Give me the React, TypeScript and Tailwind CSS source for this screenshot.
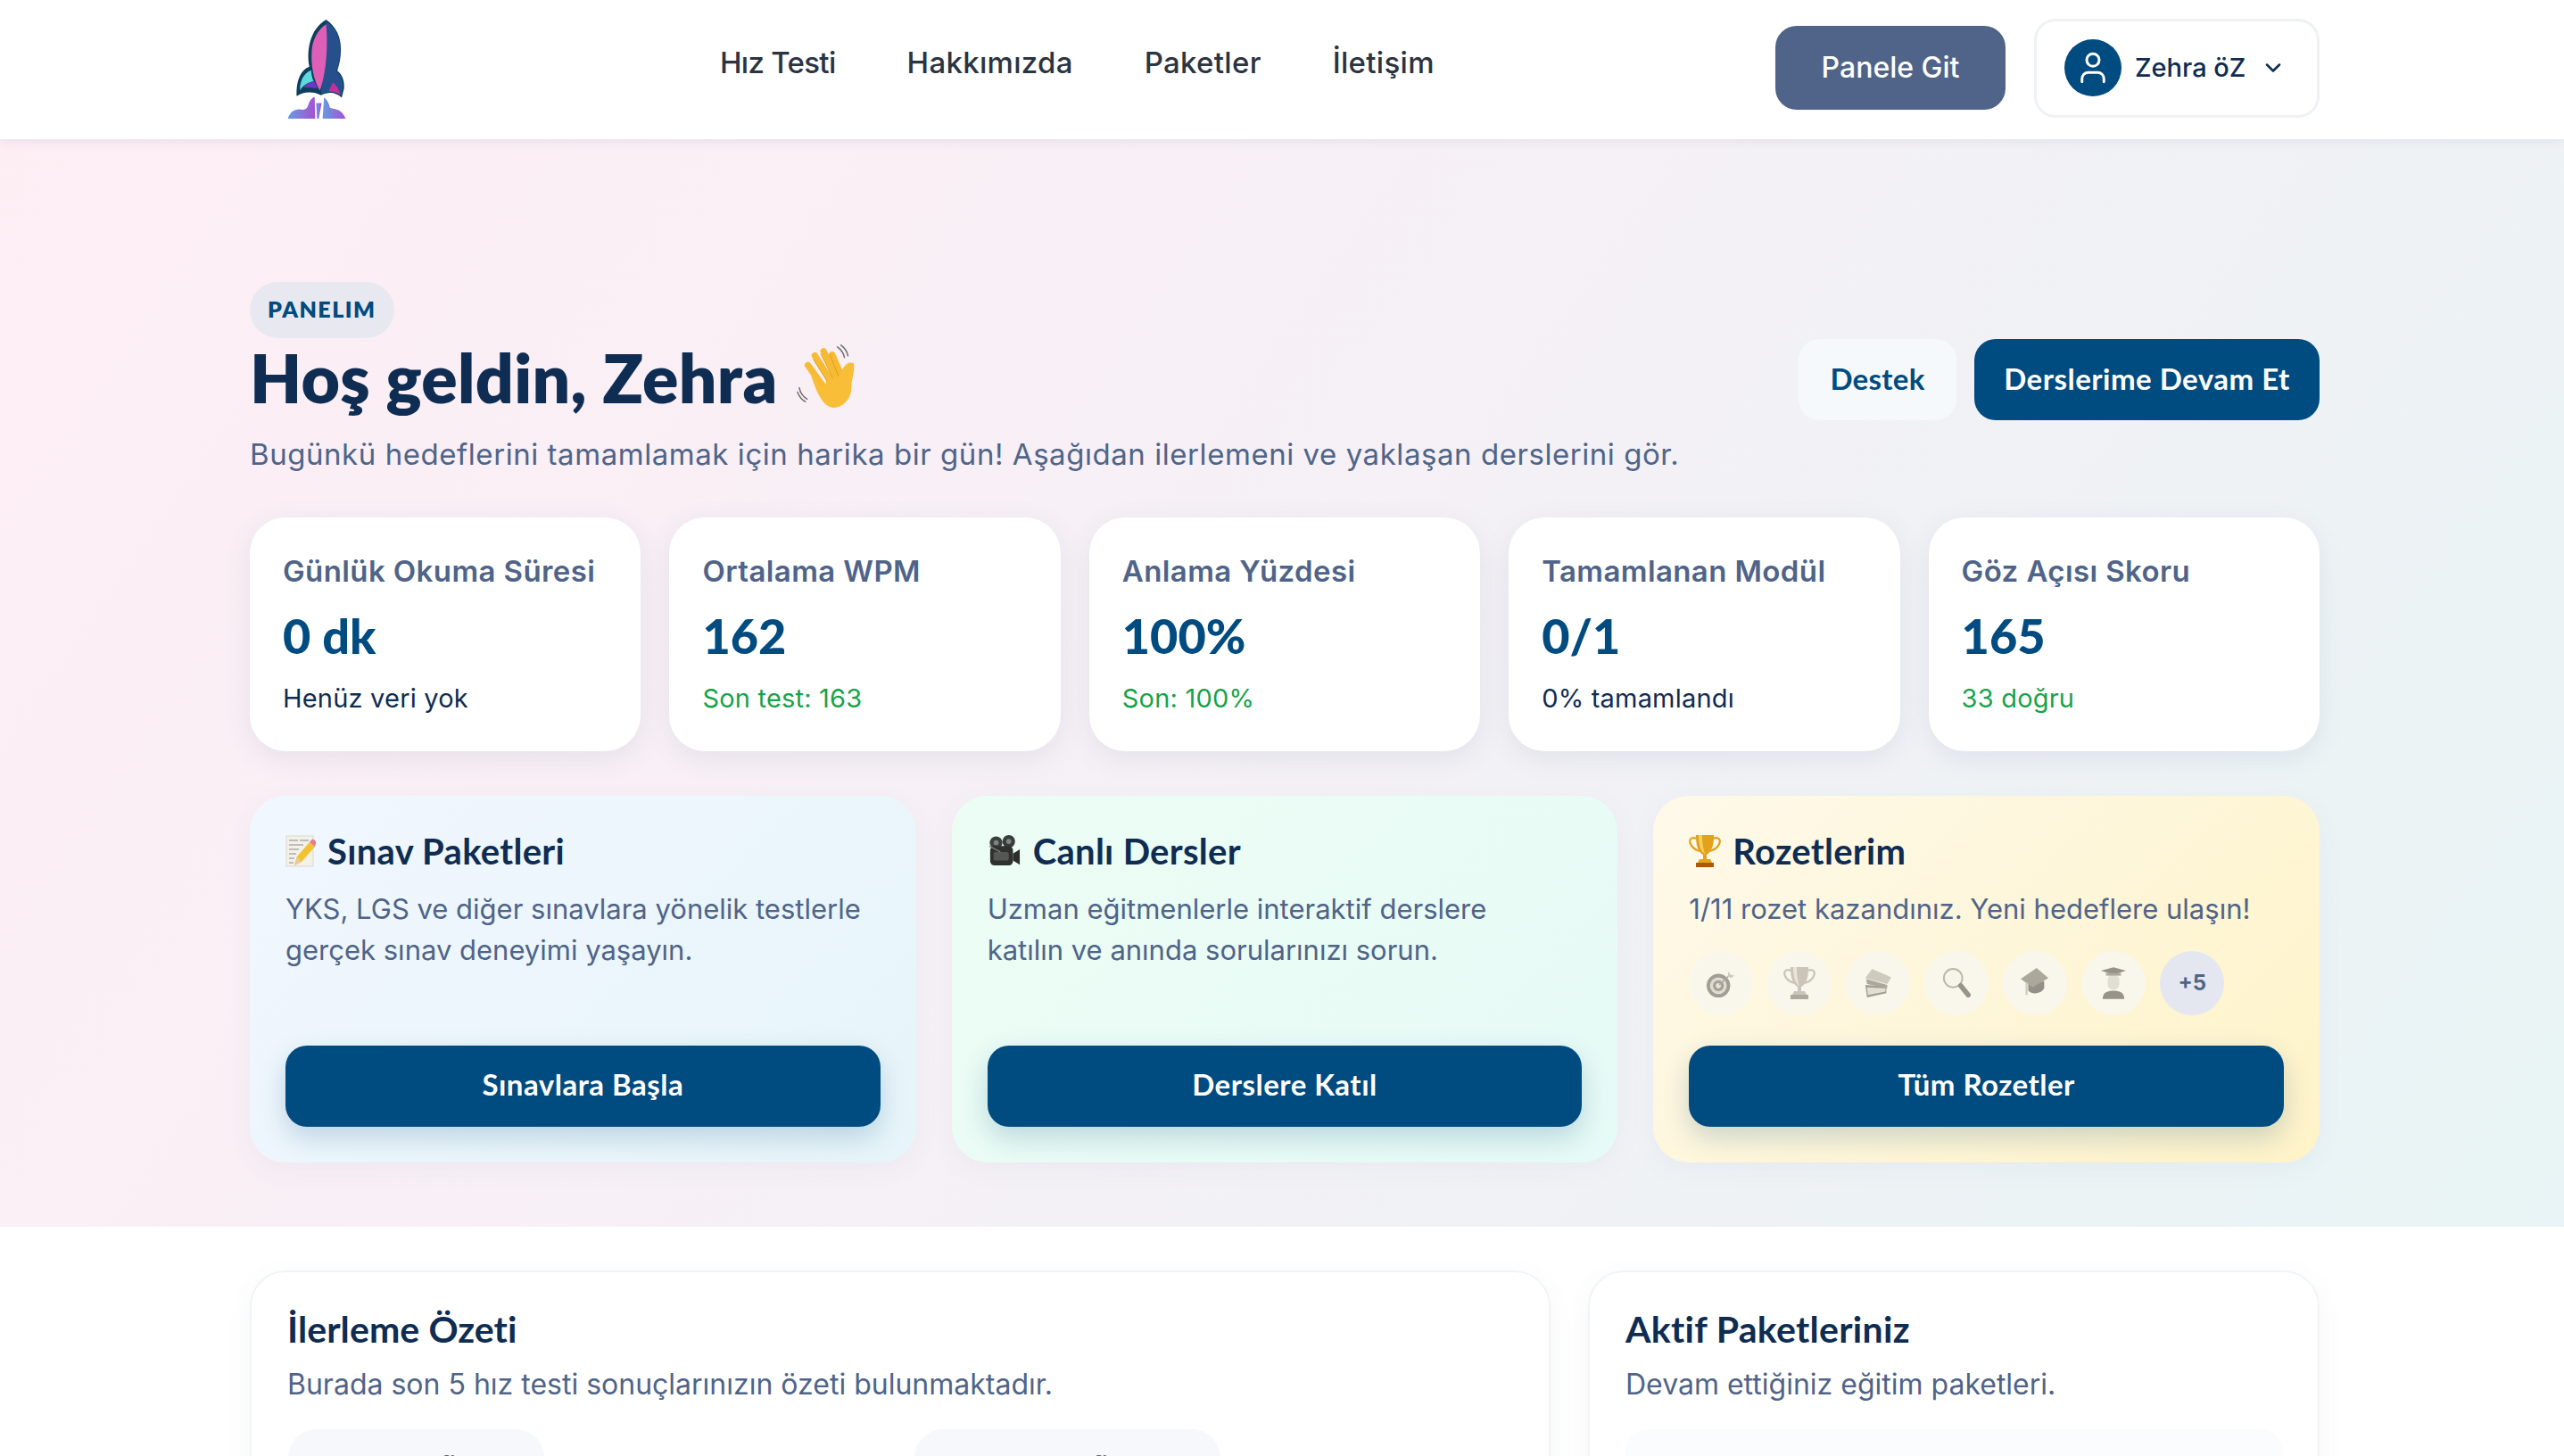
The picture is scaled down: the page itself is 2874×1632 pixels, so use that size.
import React from "react";
import { ChevronDown, User } from "lucide-react";

const Logo = () => (
  <svg viewBox="215 60 200 340" className="w-[66px] h-[113px]">
    <defs>
      <linearGradient id="flame" x1="0" y1="0" x2="1" y2="0">
        <stop offset="0" stopColor="#669be2" />
        <stop offset="1" stopColor="#a652d2" />
      </linearGradient>
    </defs>
    <path d="M347 62C380 85 398 120 397 165C397 190 392 215 385 235C402 248 410 270 408 295L400 327C380 308 355 305 330 319C305 305 270 305 247 322C245 280 255 235 290 222C280 170 290 95 347 62Z" fill="#0e3f5f" />
    <path d="M347 68C380 90 396 125 394 165C394 190 390 215 382 238C398 250 406 272 404 295L399 318C380 305 355 303 330 315L347 68Z" fill="#25508c" />
    <path d="M347 78C352 130 352 230 326 303C305 270 295 220 298 170C300 130 320 95 347 78Z" fill="#e05fb6" />
    <path d="M258 302C258 270 270 245 296 234C297 250 300 262 305 272C285 275 270 285 258 302Z" fill="#5ed9de" />
    <path d="M270 292C282 278 295 272 306 270L318 296C300 292 285 292 270 292Z" fill="#6b37c6" />
    <path d="M356 305C360 295 366 285 370 275C382 285 392 300 396 318C382 308 370 305 356 305Z" fill="#c1319b" />
    <path d="M217 398C225 372 245 362 268 368C278 368 284 362 287 350C290 338 298 328 308 324L310 398Z" fill="url(#flame)" />
    <path d="M313 345L332 345L322 398L316 398Z" fill="url(#flame)" />
    <path d="M335 398L340 326C350 332 356 345 360 360C370 368 400 360 413 398Z" fill="url(#flame)" />
  </svg>
);

const Wave = () => (
  <svg viewBox="0 0 72 76" className="w-[72px] h-[74px] shrink-0">
    <g stroke="#6f6f6f" strokeWidth="1.6" fill="none" strokeLinecap="round">
      <path d="M47 3C51 6 54 10 55 15" />
      <path d="M51 1C55 4 58 8 59 13" />
      <path d="M3 50C4 55 7 60 12 63" />
      <path d="M1 55C3 60 6 64 10 66" />
    </g>
    <g stroke="#f7bb33" strokeWidth="7.5" strokeLinecap="round" fill="none">
      <path d="M13 24L34 53" />
      <path d="M21 13L42 46" />
      <path d="M31 8L48 43" />
      <path d="M41 12L54 42" />
    </g>
    <g stroke="#e09a1f" strokeWidth="1" fill="none">
      <path d="M19 17L38 47" />
      <path d="M28 11L44 44" />
      <path d="M38 11L50 41" />
    </g>
    <path d="M16 34C24 47 32 55 34 42L50 36C52 28 58 18 66 22C67 32 63 40 63 50C63 66 48 76 38 72C28 68 21 50 16 34Z" fill="#f8be37" />
  </svg>
);

const Memo = () => (
  <svg viewBox="0 0 34 36" className="w-[34px] h-[36px] shrink-0">
    <rect x="1" y="1" width="30" height="34" fill="#f3f1e8" stroke="#c9c7bd" strokeWidth="0.6" />
    <g stroke="#8a8a8a" strokeWidth="1.1">
      <path d="M4 6H14M16 6H26M4 11H20M4 16H15M4 21H12M4 26H10M4 31H9" />
    </g>
    <path d="M10 34L13 24L27 8L33 13L18 30Z" fill="#f2c230" />
    <path d="M10 34L13 24L18 30Z" fill="#e9c99a" />
    <path d="M27 8L29 5.5C30 4.5 31.5 4.5 32.5 5.5L34 7.5C34.5 8.5 34.5 10 33.5 11L33 13Z" fill="#e77b93" />
  </svg>
);

const Camera = () => (
  <svg viewBox="0 0 38 38" className="w-[38px] h-[36px] shrink-0">
    <circle cx="9" cy="9" r="7.5" fill="#3d3f3f" />
    <circle cx="9" cy="9" r="3" fill="#7c8585" />
    <circle cx="24" cy="7.5" r="7.5" fill="#3a3c3c" />
    <circle cx="24" cy="7.5" r="3" fill="#7c8585" />
    <rect x="2" y="13" width="27" height="23" rx="5" fill="#2f3130" />
    <rect x="6" y="20" width="18" height="10" rx="2" fill="#565654" />
    <path d="M29 22L37 17V35L29 30Z" fill="#2c2d2c" />
    <path d="M1 13L14 20" stroke="#7c7c78" strokeWidth="1.5" />
  </svg>
);

const Trophy = ({ gray }: { gray?: boolean }) => {
  const main = gray ? "#b7b0a4" : "#e3a11d";
  const dark = gray ? "#8f897e" : "#a9590f";
  return (
    <svg viewBox="0 0 36 38" className="w-[36px] h-[38px] shrink-0">
      <path d="M9 5C2 2 0 7 2 11C4 16 9 18 12 19" fill="none" stroke={main} strokeWidth="2.2" />
      <path d="M27 5C34 2 36 7 34 11C32 16 27 18 24 19" fill="none" stroke={main} strokeWidth="2.2" />
      <path d="M8 1H28C28 12 26 20 20 23V28H16V23C10 20 8 12 8 1Z" fill={main} />
      <path d="M11 1H15C15 10 16 16 18 22C13 19 11 11 11 1Z" fill={gray ? "#e2ddd2" : "#f7d35d"} />
      <path d="M12 28H24L26 32H10Z" fill={main} />
      <rect x="8" y="32" width="20" height="5" fill={dark} />
    </svg>
  );
};

const Target = () => (
  <svg viewBox="0 0 36 36" className="w-[34px] h-[34px]">
    <circle cx="15" cy="21" r="14" fill="#7d7a72" />
    <circle cx="15" cy="21" r="10" fill="#d6d2c8" />
    <circle cx="15" cy="21" r="6.5" fill="#857f75" />
    <circle cx="15" cy="21" r="3" fill="#e3dfd5" />
    <path d="M16 20L29 8" stroke="#8a867c" strokeWidth="1.6" />
    <path d="M27 4L29 8L34 9L30 12L26 10Z" fill="#bdb8ac" />
  </svg>
);

const Books = () => (
  <svg viewBox="0 0 34 36" className="w-[32px] h-[36px]">
    <path d="M2 20L27 22V30L4 35Z" fill="#7f7a6f" />
    <path d="M4 23L26 24V28L5 32Z" fill="#d9d4c8" />
    <path d="M2 12L28 19L33 11L10 1Z" fill="#bdb8ab" />
    <path d="M3 13L28 20V24L4 19Z" fill="#8d887c" />
  </svg>
);

const Magnifier = () => (
  <svg viewBox="0 0 34 38" className="w-[32px] h-[36px]">
    <circle cx="13" cy="13" r="11" fill="#f7f4ea" stroke="#a59c8c" strokeWidth="2" />
    <path d="M22 22L31 33" stroke="#6f6b62" strokeWidth="6" strokeLinecap="round" />
  </svg>
);

const Cap = () => (
  <svg viewBox="0 0 34 38" className="w-[32px] h-[36px]">
    <path d="M9 18V28C14 33 24 32 28 25V17Z" fill="#6b665d" />
    <path d="M0 14L19 1L33 13L14 24Z" fill="#8b867a" />
    <path d="M7 18V33" stroke="#bdb8ab" strokeWidth="2.4" />
  </svg>
);

const Student = () => (
  <svg viewBox="0 0 30 38" className="w-[28px] h-[36px]">
    <path d="M2 38C2 30 8 28 15 28C22 28 28 30 28 38Z" fill="#6f6a60" />
    <rect x="8" y="8" width="14" height="19" rx="7" fill="#d9d5ca" />
    <path d="M0 4L15 0L30 4L15 9Z" fill="#6f6a60" />
    <path d="M6 7H24V10H6Z" fill="#8f8a7e" />
  </svg>
);

const stats = [
  { label: "Günlük Okuma Süresi", value: "0 dk", note: "Henüz veri yok", green: false },
  { label: "Ortalama WPM", value: "162", note: "Son test: 163", green: true },
  { label: "Anlama Yüzdesi", value: "100%", note: "Son: 100%", green: true },
  { label: "Tamamlanan Modül", value: "0/1", note: "0% tamamlandı", green: false },
  { label: "Göz Açısı Skoru", value: "165", note: "33 doğru", green: true },
];

const badges = [
  <Target key="target" />,
  <Trophy key="trophy" gray />,
  <Books key="books" />,
  <Magnifier key="magnifier" />,
  <Cap key="cap" />,
  <Student key="student" />,
];

const CardButton = ({ children }: { children: React.ReactNode }) => (
  <button className="mt-auto w-full h-[91px] pb-[3px] shrink-0 rounded-[24px] bg-[#004b80] text-white text-[33px] tracking-[0.5px] font-bold font-['Lato',sans-serif] shadow-[0_12px_30px_rgba(0,75,128,0.2)]">
    {children}
  </button>
);

const CardTitle = ({ icon, children }: { icon: React.ReactNode; children: React.ReactNode }) => (
  <h3 className="flex items-center gap-[13px] h-[44px] text-[40px] tracking-[0.3px] font-bold text-[#0f2c52] font-['Lato',sans-serif]">
    {icon}
    {children}
  </h3>
);

export default function App() {
  return (
    <div className="h-[1632px] overflow-hidden bg-white font-['Inter',sans-serif]">
      <header className="relative z-10 h-[156px] bg-white shadow-[0_2px_12px_rgba(15,44,82,0.08)]">
        <div className="ml-[280px] mr-[274px] h-full flex items-center">
          <div className="ml-[42px] mt-[-2px]">
            <Logo />
          </div>
          <nav className="ml-[419px] mt-[-14px] flex gap-[80px] text-[33px] tracking-[0.3px] font-medium text-[#2b3441]">
            <a className="tracking-[-0.7px]">Hız Testi</a>
            <a>Hakkımızda</a>
            <a>Paketler</a>
            <a>İletişim</a>
          </nav>
          <div className="ml-auto mt-[-4px] flex items-center gap-[32px]">
            <button className="w-[258px] h-[94px] rounded-[24px] bg-[#4f6488] text-white text-[32px] font-medium">
              Panele Git
            </button>
            <div className="w-[320px] h-[111px] rounded-[24px] border-[3px] border-[#eff2f5] flex items-center pl-[31px] text-[#0f2c52]">
              <span className="w-[64px] h-[64px] rounded-full bg-[#004b80] flex items-center justify-center">
                <User size={42} strokeWidth={1.7} className="text-white" />
              </span>
              <span className="ml-[15px] text-[29px] font-medium">Zehra öZ</span>
              <ChevronDown size={28} strokeWidth={2.2} className="ml-[17px]" />
            </div>
          </div>
        </div>
      </header>

      <section className="h-[1219px] pl-[280px] pr-[274px] pt-[160px] bg-[linear-gradient(125deg,#fdeef4_0%,#f7f0f6_40%,#e8f4f5_100%)]">
        <div className="flex justify-between items-end">
          <div>
            <span className="inline-flex items-center h-[63px] pb-[2px] px-[20px] rounded-full bg-[#e8e9f0] text-[25px] font-extrabold tracking-[1.5px] text-[#004b80] font-['Lato',sans-serif]">
              PANELIM
            </span>
            <h1 className="flex items-center gap-[20px] h-[90px] mt-[-1px] text-[75px] tracking-[0.3px] font-extrabold text-[#0f2c52] font-['Lato',sans-serif]">
              Hoş geldin, Zehra
              <Wave />
            </h1>
          </div>
          <div className="flex gap-[20px] mb-[-3px]">
            <button className="w-[177px] h-[91px] pb-[2px] rounded-[24px] bg-[#f6f9fb] text-[#004b80] text-[33px] tracking-[0.3px] font-bold font-['Lato',sans-serif]">
              Destek
            </button>
            <button className="w-[387px] h-[91px] pb-[2px] rounded-[24px] bg-[#004b80] text-white text-[33px] tracking-[0.5px] font-bold font-['Lato',sans-serif]">
              Derslerime Devam Et
            </button>
          </div>
        </div>
        <p className="mt-[17px] text-[33px] tracking-[0.55px] leading-[48px] text-[#4f6488]">
          Bugünkü hedeflerini tamamlamak için harika bir gün! Aşağıdan ilerlemeni ve yaklaşan derslerini gör.
        </p>

        <div className="mt-[47px] grid grid-cols-5 gap-[32px]">
          {stats.map((s) => (
            <div
              key={s.label}
              className="h-[262px] rounded-[40px] bg-white px-[37px] pt-[36px] shadow-[0_8px_30px_rgba(79,100,136,0.1)]"
            >
              <div className="text-[33px] tracking-[0.4px] leading-[48px] font-semibold text-[#4f6488]">{s.label}</div>
              <div className="mt-[18px] text-[54px] leading-[62px] font-black text-[#004b80] font-['Lato',sans-serif]">
                {s.value}
              </div>
              <div className={`mt-[17px] text-[29px] tracking-[0.2px] leading-[44px] ${s.green ? "text-[#16a34a]" : "text-[#0f2c52]"}`}>
                {s.note}
              </div>
            </div>
          ))}
        </div>

        <div className="mt-[50px] grid grid-cols-3 gap-[40px]">
          <div className="h-[411px] rounded-[40px] p-[40px] flex flex-col bg-[linear-gradient(135deg,#f1f7fe,#e6f5f9)] shadow-[0_8px_30px_rgba(79,100,136,0.05)]">
            <CardTitle icon={<Memo />}>Sınav Paketleri</CardTitle>
            <p className="mt-[20px] text-[31px] leading-[46px] text-[#4f6488]">
              YKS, LGS ve diğer sınavlara yönelik testlerle gerçek sınav deneyimi yaşayın.
            </p>
            <CardButton>Sınavlara Başla</CardButton>
          </div>
          <div className="h-[411px] rounded-[40px] p-[40px] flex flex-col bg-[linear-gradient(135deg,#ecfdf4,#e6faf6)] shadow-[0_8px_30px_rgba(79,100,136,0.05)]">
            <CardTitle icon={<Camera />}>Canlı Dersler</CardTitle>
            <p className="mt-[20px] text-[31px] leading-[46px] text-[#4f6488]">
              Uzman eğitmenlerle interaktif derslere
              <br />
              katılın ve anında sorularınızı sorun.
            </p>
            <CardButton>Derslere Katıl</CardButton>
          </div>
          <div className="h-[411px] rounded-[40px] p-[40px] flex flex-col bg-[linear-gradient(135deg,#fef9ea,#fef3c8)] shadow-[0_8px_30px_rgba(79,100,136,0.05)]">
            <CardTitle icon={<Trophy />}>Rozetlerim</CardTitle>
            <p className="mt-[20px] text-[31px] leading-[46px] text-[#4f6488]">
              1/11 rozet kazandınız. Yeni hedeflere ulaşın!
            </p>
            <div className="mt-[24px] flex gap-[16px]">
              {badges.map((b, i) => (
                <span key={i} className="w-[72px] h-[72px] rounded-full bg-[#f9f6ec] flex items-center justify-center">
                  <span className="flex opacity-70">{b}</span>
                </span>
              ))}
              <span className="w-[72px] h-[72px] rounded-full bg-[#e4e7f0] flex items-center justify-center text-[24px] font-bold text-[#4f6488]">
                +5
              </span>
            </div>
            <CardButton>Tüm Rozetler</CardButton>
          </div>
        </div>
      </section>

      <section className="px-[280px] pt-[49px] grid grid-cols-[1458px_820px] gap-[42px] bg-white">
        <div className="h-[500px] rounded-[40px] border-2 border-[#f1f4f7] px-[40px] pt-[38px] shadow-[0_8px_30px_rgba(79,100,136,0.06)]">
          <h2 className="text-[41px] tracking-[0.1px] leading-[52px] font-bold text-[#0f2c52] font-['Lato',sans-serif]">İlerleme Özeti</h2>
          <p className="mt-[12px] text-[32px] leading-[48px] text-[#4f6488]">
            Burada son 5 hız testi sonuçlarınızın özeti bulunmaktadır.
          </p>
          <div className="mt-[26px] flex">
            <span className="ml-[1px] w-[287px] h-[64px] rounded-full bg-[#f6f8fb] pl-[20px] pt-[20px] text-[28px] font-medium text-[#4f6488] whitespace-nowrap">
              WPM Hedefi: <b className="text-[#0f2c52]">250</b>
            </span>
            <span className="ml-[415px] w-[343px] h-[64px] rounded-full bg-[#f6f8fb] pl-[20px] pt-[20px] text-[28px] font-medium text-[#4f6488] whitespace-nowrap">
              Anlama Hedefi: <b className="text-[#0f2c52]">80%</b>
            </span>
          </div>
        </div>
        <div className="h-[500px] rounded-[40px] border-2 border-[#f1f4f7] px-[40px] pt-[38px] shadow-[0_8px_30px_rgba(79,100,136,0.06)]">
          <h2 className="text-[41px] tracking-[0.3px] leading-[52px] font-bold text-[#0f2c52] font-['Lato',sans-serif]">Aktif Paketleriniz</h2>
          <p className="mt-[12px] text-[32px] leading-[48px] text-[#4f6488]">Devam ettiğiniz eğitim paketleri.</p>
          <div className="mt-[26px] h-[200px] rounded-[24px] bg-[#fafcfd]" />
        </div>
      </section>
    </div>
  );
}
